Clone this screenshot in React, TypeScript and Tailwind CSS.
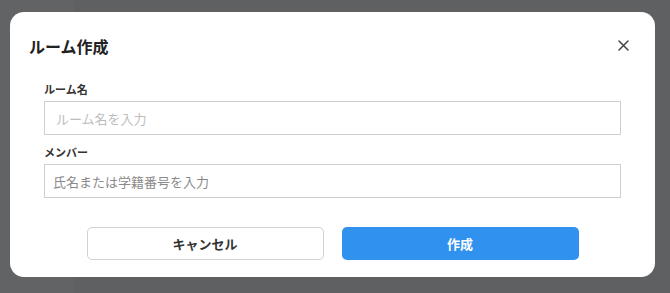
import React from "react";

export default function App() {
  const font = { fontFamily: '"Noto Sans CJK JP", "Noto Sans", sans-serif' };
  return (
    <div className="w-[670px] h-[293px] bg-[#5f6062] flex" style={font}>
      <div className="w-[74px] shrink-0 bg-[#626365]" />
      <div className="flex-1" />
      <div className="absolute left-[10px] top-[12px] w-[645px] h-[265px] bg-white rounded-[14px] flex flex-col">
        <div className="flex items-center justify-between h-[66px] pl-[19px] pr-[26px] pt-[1px]">
          <span className="text-[16px] font-bold text-[#222] leading-none">ルーム作成</span>
          <svg width="11" height="11" viewBox="0 0 11 11">
            <path d="M1 1L10 10M10 1L1 10" stroke="#444" strokeWidth="1.5" strokeLinecap="round" />
          </svg>
        </div>
        <div className="px-[34px] pt-[6px] flex flex-col">
          <label className="text-[11px] font-bold text-[#333] leading-none mb-[6px]">ルーム名</label>
          <div className="h-[34px] border border-[#cfcfcf] flex items-center px-[11px]">
            <span className="text-[13px] text-[#bdbdbd] leading-none">ルーム名を入力</span>
          </div>
          <label className="text-[11px] font-bold text-[#333] leading-none mt-[12px] mb-[6px]">メンバー</label>
          <div className="h-[34px] border border-[#cfcfcf] flex items-center px-[8px]">
            <span className="text-[13px] text-[#8a8a8a] leading-none">氏名または学籍番号を入力</span>
          </div>
        </div>
        <div className="flex justify-center gap-[18px] mt-[29px]">
          <button className="w-[237px] h-[33px] border border-[#d2d2d2] rounded-[5px] bg-white text-[13px] font-bold text-[#333] flex items-center justify-center">
            キャンセル
          </button>
          <button className="w-[237px] h-[33px] rounded-[5px] bg-[#3092ee] text-[13px] font-bold text-white flex items-center justify-center">
            作成
          </button>
        </div>
      </div>
    </div>
  );
}
